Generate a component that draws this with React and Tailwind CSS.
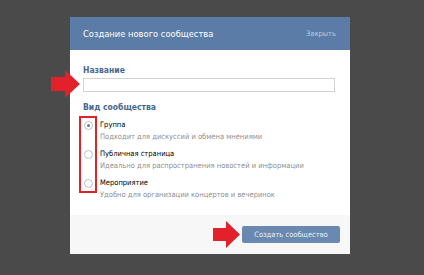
export default function App() {
  const f = { fontFamily: '"DejaVu Sans Condensed", "DejaVu Sans", sans-serif' };
  return (
    <div className="relative w-[424px] h-[275px] bg-[#4a4a4a] overflow-hidden" style={f}>
      <div className="absolute left-[70px] top-[17px] w-[280px] bg-white">
        <div className="h-[33px] bg-[#5b7ca6] flex items-center justify-between pl-[13px] pr-[14px]">
          <span className="text-[9.3px] text-white whitespace-nowrap">Создание нового сообщества</span>
          <span className="text-[7.5px] text-[#b9cbe2] whitespace-nowrap">Закрыть</span>
        </div>
        <div className="pl-[13px] pr-[15px] pt-[13px] pb-[14px]">
          <div className="text-[8.5px] font-bold text-[#45688e] leading-[14px]">Название</div>
          <div className="mt-[1px] h-[14px] border border-[#d3d3d3] bg-white"></div>
          <div className="mt-[8px] text-[8.5px] font-bold text-[#45688e] leading-[14px]">Вид сообщества</div>
          <div className="mt-[5px] flex flex-col gap-[5px]">
            {[
              ["Группа", "Подходит для дискуссий и обмена мнениями", true],
              ["Публичная страница", "Идеально для распространения новостей и информации", false],
              ["Мероприятие", "Удобно для организации концертов и вечеринок", false],
            ].map(([t, d, on]) => (
              <div key={t} className="flex">
                <div className="w-[17px] flex justify-start pl-[1px] pt-[2px]">
                  <div className="w-[9px] h-[9px] rounded-full border border-[#b8c0c8] bg-white flex items-center justify-center">
                    {on && <div className="w-[3px] h-[3px] rounded-full bg-[#5b7ca6]"></div>}
                  </div>
                </div>
                <div className="flex flex-col">
                  <span className="text-[7.5px] leading-[12px] text-black whitespace-nowrap">{t}</span>
                  <span className="text-[7.5px] leading-[12px] text-[#8f8f8f] whitespace-nowrap">{d}</span>
                </div>
              </div>
            ))}
          </div>
        </div>
        <div className="h-[39px] bg-[#f7f7f7] flex items-center justify-end pr-[10px]">
          <div className="w-[98px] h-[17px] bg-[#6a89b0] rounded-[2px] flex items-center justify-center text-[7.5px] text-[#e8eef6] whitespace-nowrap">
            Создать сообщество
          </div>
        </div>
      </div>
      {/* red box */}
      <div className="absolute left-[79px] top-[116px] w-[18px] h-[77px] border-2 border-[#e3212a]"></div>
      {/* arrows */}
      <svg className="absolute left-[51px] top-[70px]" width="30" height="28" viewBox="0 0 30 28">
        <polygon points="0,7 14,7 14,0 29,14 14,28 14,21 0,21" fill="#e3212a" />
      </svg>
      <svg className="absolute left-[213px] top-[221px]" width="28" height="27" viewBox="0 0 28 27">
        <polygon points="0,7 13,7 13,0 27,13.5 13,27 13,20 0,20" fill="#e3212a" />
      </svg>
    </div>
  );
}
